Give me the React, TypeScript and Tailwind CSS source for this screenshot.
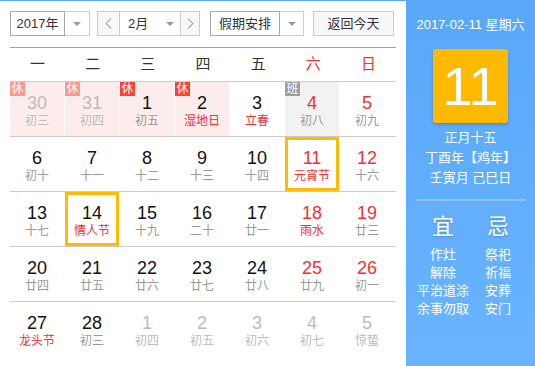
import React from "react";

type Cell = {
  d: string;
  l: string;
  numRed?: boolean;
  lRed?: boolean;
  dim?: boolean;
  bg?: "pink" | "gray";
  badge?: "xiuLight" | "xiu" | "ban";
  sel?: boolean;
};

const rows: Cell[][] = [
  [
    { d: "30", l: "初三", dim: true, bg: "pink", badge: "xiuLight" },
    { d: "31", l: "初四", dim: true, bg: "pink", badge: "xiuLight" },
    { d: "1", l: "初五", bg: "pink", badge: "xiu" },
    { d: "2", l: "湿地日", lRed: true, bg: "pink", badge: "xiu" },
    { d: "3", l: "立春", lRed: true },
    { d: "4", l: "初八", numRed: true, bg: "gray", badge: "ban" },
    { d: "5", l: "初九", numRed: true },
  ],
  [
    { d: "6", l: "初十" },
    { d: "7", l: "十一" },
    { d: "8", l: "十二" },
    { d: "9", l: "十三" },
    { d: "10", l: "十四" },
    { d: "11", l: "元宵节", numRed: true, lRed: true, sel: true },
    { d: "12", l: "十六", numRed: true },
  ],
  [
    { d: "13", l: "十七" },
    { d: "14", l: "情人节", lRed: true, sel: true },
    { d: "15", l: "十九" },
    { d: "16", l: "二十" },
    { d: "17", l: "廿一" },
    { d: "18", l: "雨水", numRed: true, lRed: true },
    { d: "19", l: "廿三", numRed: true },
  ],
  [
    { d: "20", l: "廿四" },
    { d: "21", l: "廿五" },
    { d: "22", l: "廿六" },
    { d: "23", l: "廿七" },
    { d: "24", l: "廿八" },
    { d: "25", l: "廿九", numRed: true },
    { d: "26", l: "初一", numRed: true },
  ],
  [
    { d: "27", l: "龙头节", lRed: true },
    { d: "28", l: "初三" },
    { d: "1", l: "初四", dim: true },
    { d: "2", l: "初五", dim: true },
    { d: "3", l: "初六", dim: true },
    { d: "4", l: "初七", dim: true },
    { d: "5", l: "惊蛰", dim: true },
  ],
];

const weekdays = ["一", "二", "三", "四", "五", "六", "日"];

function Arrow() {
  return (
    <div className="w-0 h-0 border-x-[4px] border-x-transparent border-t-[4px] border-t-[#999]" />
  );
}

function Chevron({ dir }: { dir: "l" | "r" }) {
  return (
    <svg width="7" height="11" viewBox="0 0 7 11">
      <polyline
        points={dir === "l" ? "6,0.5 1,5.5 6,10.5" : "1,0.5 6,5.5 1,10.5"}
        fill="none"
        stroke="#777"
        strokeWidth="1"
      />
    </svg>
  );
}

function DayCell({ c }: { c: Cell }) {
  const bg =
    c.bg === "pink" ? "bg-[#fdecec]" : c.bg === "gray" ? "bg-[#f2f2f2]" : "bg-white";
  const numColor = c.dim ? "text-[#bbbbbb]" : c.numRed ? "text-[#ee3333]" : "text-[#111]";
  const lColor = c.dim ? "text-[#bbbbbb]" : c.lRed ? "text-[#ee3333]" : "text-[#999]";
  return (
    <div className="w-[55px] h-[54px] pr-[1px]">
      <div
        className={`relative w-[54px] h-[54px] ${bg} flex flex-col items-center pt-[11px] ${
          c.sel ? "shadow-[inset_0_0_0_3px_#ffbb00]" : ""
        }`}
      >
        {c.badge && (
          <div
            className={`absolute top-0 left-0 w-[15px] h-[14px] text-white text-[12px] leading-[14px] text-center ${
              c.badge === "xiuLight"
                ? "bg-[#fa9a8f]"
                : c.badge === "xiu"
                ? "bg-[#f64338]"
                : "bg-[#9e9e9e]"
            }`}
          >
            {c.badge === "ban" ? "班" : "休"}
          </div>
        )}
        <div className={`text-[18px] leading-[20px] ${numColor}`}>{c.d}</div>
        <div className={`text-[12px] leading-[16px] ${lColor}`}>{c.l}</div>
      </div>
    </div>
  );
}

export default function App() {
  return (
    <div className="w-[535px] h-[366px] flex border-t border-[#5aa8f8] bg-white font-['Liberation_Sans','Noto_Sans_CJK_SC',sans-serif] overflow-hidden">
      {/* Left */}
      <div className="w-[406px] px-[10px] pt-[10px] flex flex-col">
        {/* controls */}
        <div className="flex items-center h-[25px] text-[13px] text-[#333]">
          <div className="flex h-[25px] w-[80px]">
            <div className="w-[55px] border border-[#a8a8a8] flex items-center justify-center">
              2017年
            </div>
            <div className="w-[25px] border-y border-r border-[#cccccc] flex items-center justify-center">
              <Arrow />
            </div>
          </div>
          <div className="flex h-[25px] w-[103px] ml-[7px]">
            <div className="w-[23px] border border-[#cccccc] bg-[#f7f7f7] flex items-center justify-center">
              <Chevron dir="l" />
            </div>
            <div className="w-[60px] border-y border-[#cccccc] flex items-center pl-[8px]">
              <span>2月</span>
              <div className="ml-[18px]">
                <Arrow />
              </div>
            </div>
            <div className="w-[20px] border border-[#cccccc] bg-[#f7f7f7] flex items-center justify-center">
              <Chevron dir="r" />
            </div>
          </div>
          <div className="flex h-[25px] w-[94px] ml-[10px]">
            <div className="w-[70px] border border-[#a8a8a8] flex items-center justify-center">
              假期安排
            </div>
            <div className="w-[24px] border-y border-r border-[#cccccc] flex items-center justify-center">
              <Arrow />
            </div>
          </div>
          <div className="w-[81px] h-[25px] ml-[9px] border border-[#cccccc] bg-[#f7f7f7] flex items-center justify-center">
            返回今天
          </div>
        </div>
        <div className="h-[1px] bg-[#6aaef5] mt-[11px]" />
        {/* weekday header */}
        <div className="grid grid-cols-7 h-[33px] items-center text-[15px]">
          {weekdays.map((w, i) => (
            <div
              key={w}
              className={`text-center ${i >= 5 ? "text-[#ee3333]" : "text-[#333]"}`}
            >
              {w}
            </div>
          ))}
        </div>
        {/* grid */}
        <div className="flex flex-col">
          {rows.map((r, ri) => (
            <div key={ri} className="flex border-t border-[#cccccc]">
              {r.map((c, ci) => (
                <DayCell key={ci} c={c} />
              ))}
            </div>
          ))}
        </div>
      </div>
      {/* Right panel */}
      <div className="w-[129px] bg-gradient-to-b from-[#58a7f9] to-[#6ab4ff] flex flex-col items-center text-white">
        <div className="mt-[14px] text-[13px] leading-[20px]">2017-02-11 星期六</div>
        <div className="mt-[14px] w-[75px] h-[74px] rounded-[3px] bg-[#ffb900] shadow-[0_2px_3px_rgba(0,0,0,0.18)] flex items-center justify-center text-[54px] leading-none">
          11
        </div>
        <div className="mt-[5px] flex flex-col items-center text-[13px] leading-[20px]">
          <div>正月十五</div>
          <div>丁酉年【鸡年】</div>
          <div>壬寅月 己巳日</div>
        </div>
        <div className="mt-[11px] w-[110px] h-[2px] bg-[#8fc5fc]" />
        <div className="w-[110px] grid grid-cols-2 mt-[13px]">
          <div className="flex flex-col items-center">
            <div className="text-[22px] leading-[26px] [text-shadow:0_1px_2px_rgba(0,0,0,0.2)]">宜</div>
            <div className="mt-[6px] flex flex-col items-center text-[13px] leading-[18px]">
              <div>作灶</div>
              <div>解除</div>
              <div className="whitespace-nowrap">平治道涂</div>
              <div className="whitespace-nowrap">余事勿取</div>
            </div>
          </div>
          <div className="flex flex-col items-center">
            <div className="text-[22px] leading-[26px] [text-shadow:0_1px_2px_rgba(0,0,0,0.2)]">忌</div>
            <div className="mt-[6px] flex flex-col items-center text-[13px] leading-[18px]">
              <div>祭祀</div>
              <div>祈福</div>
              <div>安葬</div>
              <div>安门</div>
            </div>
          </div>
        </div>
      </div>
    </div>
  );
}
